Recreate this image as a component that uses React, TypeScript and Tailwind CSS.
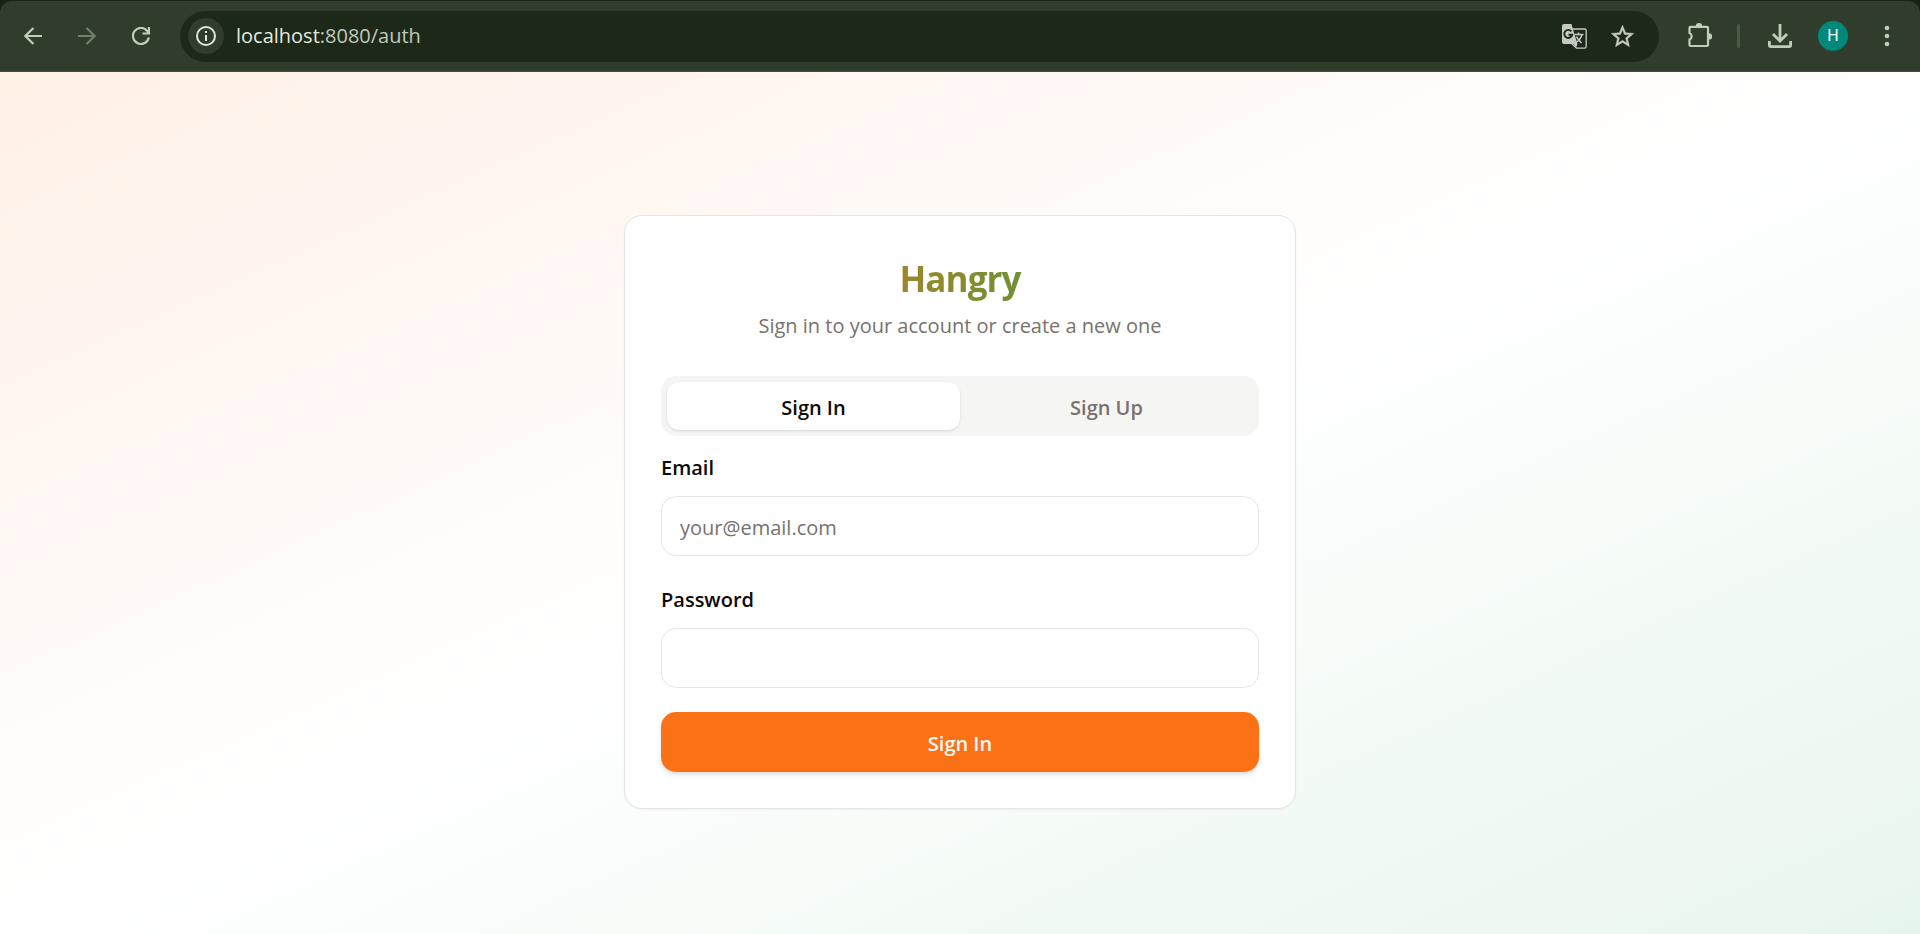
import React, { useState } from "react";

const FONT = "font-['Open_Sans','Noto_Sans',sans-serif]";

function Toolbar() {
  return (
    <header className="bg-[#162313]">
      <div className="mt-px flex h-[71px] items-center rounded-t-xl border-b border-[#454f42] bg-[#303d2d] px-[15px]">
        <button aria-label="Back" className="flex size-9 items-center justify-center text-[#bdd0b7]">
          <svg viewBox="0 0 18 18" className="size-[18px]" fill="none" stroke="currentColor" strokeWidth="2.200">
            <path d="M18 9H1.6M9.4 1L1.4 9l8 8" />
          </svg>
        </button>
        <button aria-label="Forward" className="ml-[18px] flex size-9 items-center justify-center text-[#71806d]">
          <svg viewBox="0 0 18 18" className="size-[18px]" fill="none" stroke="currentColor" strokeWidth="2.200">
            <path d="M0 9h16.4M8.600 1l8 8-8 8" />
          </svg>
        </button>
        <button aria-label="Reload" className="ml-[18px] flex size-9 items-center justify-center text-[#bdd0b7]">
          <svg viewBox="0 0 18 18" className="size-[18px]" fill="none" stroke="currentColor" strokeWidth="2.200">
            <path d="M16.800 10.500A8 8 0 1 1 15 3.700L16.500 5.500M17 0v6.500h-6.500" />
          </svg>
        </button>
        <div className="ml-[21px] flex h-[51px] flex-1 items-center rounded-full bg-[#1c2919] pl-2 pr-[19px]">
          <button aria-label="Site information" className="flex size-9 items-center justify-center rounded-full bg-[#303d2d] text-[#e0e5da]">
            <svg viewBox="0 0 20 20" className="size-5" fill="none" stroke="currentColor" strokeWidth="2">
              <circle cx="10" cy="10" r="9" />
              <path d="M10 9v6M10 5v2" />
            </svg>
          </button>
          <div className="ml-3 flex-1 text-[20px] leading-7 text-[#c0c8bb]">
            <span className="text-[#e4e9df]">localhost</span>:8080/auth
          </div>
          <button aria-label="Translate this page" className="flex size-9 items-center justify-center text-[#c5c9bf]">
            <svg viewBox="0 0 25 25" className="size-[25px]">
              <path d="M10 5h12.500A1.700 1.700 0 0 1 24.200 6.700v15.800a1.700 1.700 0 0 1-1.700 1.700H14.500L10 20z" fill="none" stroke="currentColor" strokeWidth="1.300" />
              <path d="M2 0h7.500l1.200 4.500L15.500 20H2a2 2 0 0 1-2-2V2a2 2 0 0 1 2-2z" fill="currentColor" />
              <path d="M11.500 20h4l-1.500 4z" fill="currentColor" />
              <path d="M9.400 7.400A4 4 0 1 0 10.200 10.700H6.500" fill="none" stroke="#1c2919" strokeWidth="1.900" />
              <path d="M12.500 10.500h9M16.500 8.500v2M20 10.500c-.8 3.500-3 6-6 8M14.500 12.500c1 2.500 3 4.500 5 6.500" fill="none" stroke="currentColor" strokeWidth="1.500" />
            </svg>
          </button>
          <button aria-label="Bookmark this tab" className="ml-3 flex size-9 items-center justify-center text-[#c5c9bf]">
            <svg viewBox="0 0 24 24" className="size-[27px]" fill="currentColor" stroke="currentColor" strokeWidth="0.400">
              <path d="M22 9.240l-7.190-.62L12 2 9.190 8.630 2 9.240l5.460 4.730L5.820 21 12 17.270 18.180 21l-1.630-7.030L22 9.240zM12 15.400l-3.760 2.270 1-4.280-3.320-2.880 4.380-.38L12 6.100l1.710 4.040 4.380.38-3.320 2.880 1 4.280L12 15.400z" />
            </svg>
          </button>
        </div>
        <button aria-label="Extensions" className="ml-[23px] flex size-9 items-center justify-center text-[#bdd0b7]">
          <svg viewBox="0 0 26 26" className="size-[26px]">
            <path d="M3.500 3.800H20a1 1 0 0 1 1 1V22a1 1 0 0 1-1 1H3.500a1 1 0 0 1-1-1v-5.500a3.600 3.600 0 0 0 0-6.600V4.800a1 1 0 0 1 1-1z" fill="none" stroke="currentColor" strokeWidth="2.200" />
            <path d="M8.800 4V3.200a3.200 3.200 0 0 1 6.400 0V4zM21 10.200h.9a3.200 3.200 0 0 1 0 6.400H21z" fill="currentColor" />
          </svg>
        </button>
        <div className="ml-[19px] h-6 w-[3px] rounded-full bg-[#4a5b45]" />
        <button aria-label="Downloads" className="ml-[22px] flex size-9 items-center justify-center text-[#bdd0b7]">
          <svg viewBox="0 0 24 24" className="size-6" fill="none" stroke="currentColor" strokeWidth="2.800">
            <path d="M12 0v16.500M5 10l7 7 7-7M1.400 17v4.600a1 1 0 0 0 1 1h19.200a1 1 0 0 0 1-1V17" />
          </svg>
        </button>
        <button aria-label="Profile" className="ml-5 flex size-[30px] items-center justify-center rounded-full bg-[#00897b] font-['Roboto',sans-serif] text-[16px] text-white">
          H
        </button>
        <button aria-label="Menu" className="ml-[21px] flex size-9 items-center justify-center text-[#bdd0b7]">
          <svg viewBox="0 0 6 22" className="h-[22px] w-[6px]" fill="currentColor">
            <circle cx="3" cy="3" r="2.300" />
            <circle cx="3" cy="11" r="2.300" />
            <circle cx="3" cy="19" r="2.300" />
          </svg>
        </button>
      </div>
    </header>
  );
}

const labelClass = "pt-1 text-[20px] font-semibold leading-8 text-[#0c0a09]";
const inputClass =
  "h-[60px] w-full rounded-[15px] border border-[#e7e5e4] bg-white px-[18px] pt-0.5 text-[20px] text-[#0c0a09] outline-none placeholder:text-[#78716c]";

export default function App() {
  const [tab, setTab] = useState<"in" | "up">("in");
  const tabClass = (active: boolean) =>
    active
      ? "rounded-xl bg-white pt-1 text-[#0c0a09] shadow-sm"
      : "rounded-xl pt-1 text-[#78716c]";
  return (
    <div className={`flex min-h-screen flex-col ${FONT}`}>
      <Toolbar />
      <main className="flex flex-1 items-center justify-center bg-linear-to-br/srgb from-[#fff0e6] via-white to-[#e7f6ed] px-6 pt-[18px]">
        <section className="w-full max-w-2xl rounded-[18px] border border-[#e7e5e4] bg-white p-9 shadow-xs">
          <div className="flex flex-col gap-2 pb-9 pt-0.5 text-center">
            <h1 className="bg-linear-to-r/srgb from-[#f97316] to-[#16a34a] bg-clip-text pt-0.5 text-[35px] font-bold leading-[46px] tracking-tight text-transparent">
              Hangry
            </h1>
            <p className="pt-0.5 text-[20px] leading-7 text-[#78716c]">Sign in to your account or create a new one</p>
          </div>
          <div role="tablist" className="grid h-[60px] grid-cols-2 rounded-[15px] bg-[#f5f5f4] p-1.5 text-[20px] font-semibold">
            <button role="tab" aria-selected={tab === "in"} onClick={() => setTab("in")} className={tabClass(tab === "in")}>
              Sign In
            </button>
            <button role="tab" aria-selected={tab === "up"} onClick={() => setTab("up")} className={tabClass(tab === "up")}>
              Sign Up
            </button>
          </div>
          <form className="mt-3 flex flex-col gap-6" onSubmit={(e) => e.preventDefault()}>
            <div className="flex flex-col gap-3">
              <label htmlFor="email" className={labelClass}>Email</label>
              <input id="email" type="email" placeholder="your@email.com" className={inputClass} />
            </div>
            <div className="flex flex-col gap-3">
              <label htmlFor="password" className={labelClass}>Password</label>
              <input id="password" type="password" className={inputClass} />
            </div>
            <button type="submit" className="h-[60px] rounded-[15px] bg-[#fb7116] pt-1 text-[20px] font-semibold text-[#fafaf9] shadow-md">
              {tab === "in" ? "Sign In" : "Sign Up"}
            </button>
          </form>
        </section>
      </main>
    </div>
  );
}
